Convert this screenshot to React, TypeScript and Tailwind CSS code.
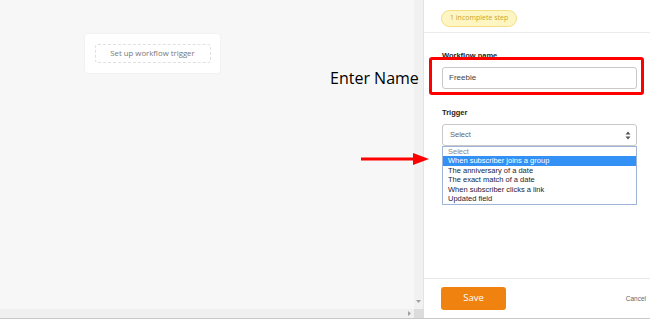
import React from "react"

const options = [
  "When subscriber joins a group",
  "The anniversary of a date",
  "The exact match of a date",
  "When subscriber clicks a link",
  "Updated field",
]

function Canvas() {
  return (
    <div className="flex-1 bg-[#f7f7f7] relative">
      {/* Trigger card */}
      <div className="absolute left-[85px] top-[34px] w-[135px] h-[39px] bg-white rounded-[3px] shadow-[0_0_2px_rgba(0,0,0,0.08)] flex items-center justify-center">
        <div className="w-[116px] h-[19px] border border-dashed border-[#e0e0e0] rounded-[3px] flex items-center justify-center text-[7.8px] text-[#777] font-['Open_Sans',sans-serif]">
          Set up workflow trigger
        </div>
      </div>
    </div>
  )
}

function Panel() {
  return (
    <div className="flex-1 bg-white flex flex-col font-['Liberation_Sans',Arial,sans-serif]">
      {/* Header */}
      <div className="h-[33px] border-b border-[#ececec] pl-[17px] pt-[3px]">
        <span className="inline-flex items-center h-[17px] px-[8px] rounded-full bg-[#fdf6c3] border border-[#f3de84] text-[7px] text-[#c9a52a] font-['Open_Sans',sans-serif]">
          1 incomplete step
        </span>
      </div>

      {/* Form */}
      <div className="flex-1 pl-[18px] pr-[13px] pt-[18px]">
        <div className="text-[7.5px] font-bold text-[#222] leading-[10px]">Workflow name</div>
        <div className="mt-[6px] h-[22px] border border-[#c9c9c9] rounded-[3px] flex items-center pl-[6px] text-[8px] text-[#444]">
          Freebie
        </div>

        <div className="mt-[19px] text-[7.5px] font-bold text-[#222] leading-[10px]">Trigger</div>
        <div className="mt-[6px] h-[22px] border border-[#c9c9c9] rounded-[3px] flex items-center justify-between pl-[7px] pr-[5px] text-[7.5px] text-[#666]">
          <span>Select</span>
          <svg width="6" height="9" viewBox="0 0 6 9" fill="#555">
            <path d="M3 0.5 L5.5 3.5 L0.5 3.5 Z" />
            <path d="M3 8.5 L5.5 5.5 L0.5 5.5 Z" />
          </svg>
        </div>
        <div className="border border-[#9fb4d6] text-[7.5px] leading-[9.4px] text-[#1d1d3a] pb-[1px]">
          <div className="pl-[5px] text-[#8a8a8a]">Select</div>
          <div className="pl-[5px] bg-[#3390f5] text-white">{options[0]}</div>
          {options.slice(1).map((o) => (
            <div key={o} className="pl-[5px]">{o}</div>
          ))}
        </div>
      </div>

      {/* Footer */}
      <div className="h-[40px] border-t border-[#e8e8e8] flex items-start justify-between pl-[17px] pr-[4px] pt-[8px]">
        <button className="w-[65px] h-[23px] bg-[#f0820f] rounded-[3px] text-white text-[9.5px] font-['Open_Sans',sans-serif]">
          Save
        </button>
        <span className="mt-[7px] text-[6.5px] text-[#666]">Cancel</span>
      </div>
    </div>
  )
}

export default function App() {
  return (
    <div className="w-[650px] h-[319px] flex flex-col overflow-hidden relative bg-white">
      <div className="flex flex-1 min-h-0">
        <div className="w-[424px] flex flex-col">
          <div className="flex flex-1">
            <Canvas />
            {/* vertical scrollbar */}
            <div className="w-[10px] bg-[#f1f1f1] border-r border-[#e4e4e4] flex flex-col justify-end items-center pb-[6px]">
              <svg width="5" height="3" viewBox="0 0 5 3">
                <path d="M0 0 L5 0 L2.5 3 Z" fill="#a0a0a0" />
              </svg>
            </div>
          </div>
          <div className="h-[9px] flex">
            <div className="flex-1 bg-[#f0f0f0] flex items-center justify-end pr-[3px]">
              <svg width="3" height="5" viewBox="0 0 3 5">
                <path d="M0 0 L3 2.5 L0 5 Z" fill="#a0a0a0" />
              </svg>
            </div>
            <div className="w-[10px] bg-[#dcdcdc]" />
          </div>
        </div>
        <Panel />
      </div>
      <div className="h-px bg-[#c8c8c8]" />

      {/* Annotations */}
      <div className="absolute left-[429px] top-[57px] w-[215px] h-[38px] border-[3px] border-[#ff0000] rounded-[3px]" />
      <div className="absolute left-[330px] top-[67px] text-[16px] leading-[22px] text-black font-['Open_Sans',sans-serif]">
        Enter Name
      </div>
      <svg className="absolute left-[360px] top-[152px]" width="70" height="14" viewBox="0 0 70 14">
        <rect x="1" y="5.5" width="54" height="3" fill="#ff0000" />
        <path d="M53 1 L69 7 L53 13 Z" fill="#ff0000" />
      </svg>
    </div>
  )
}
